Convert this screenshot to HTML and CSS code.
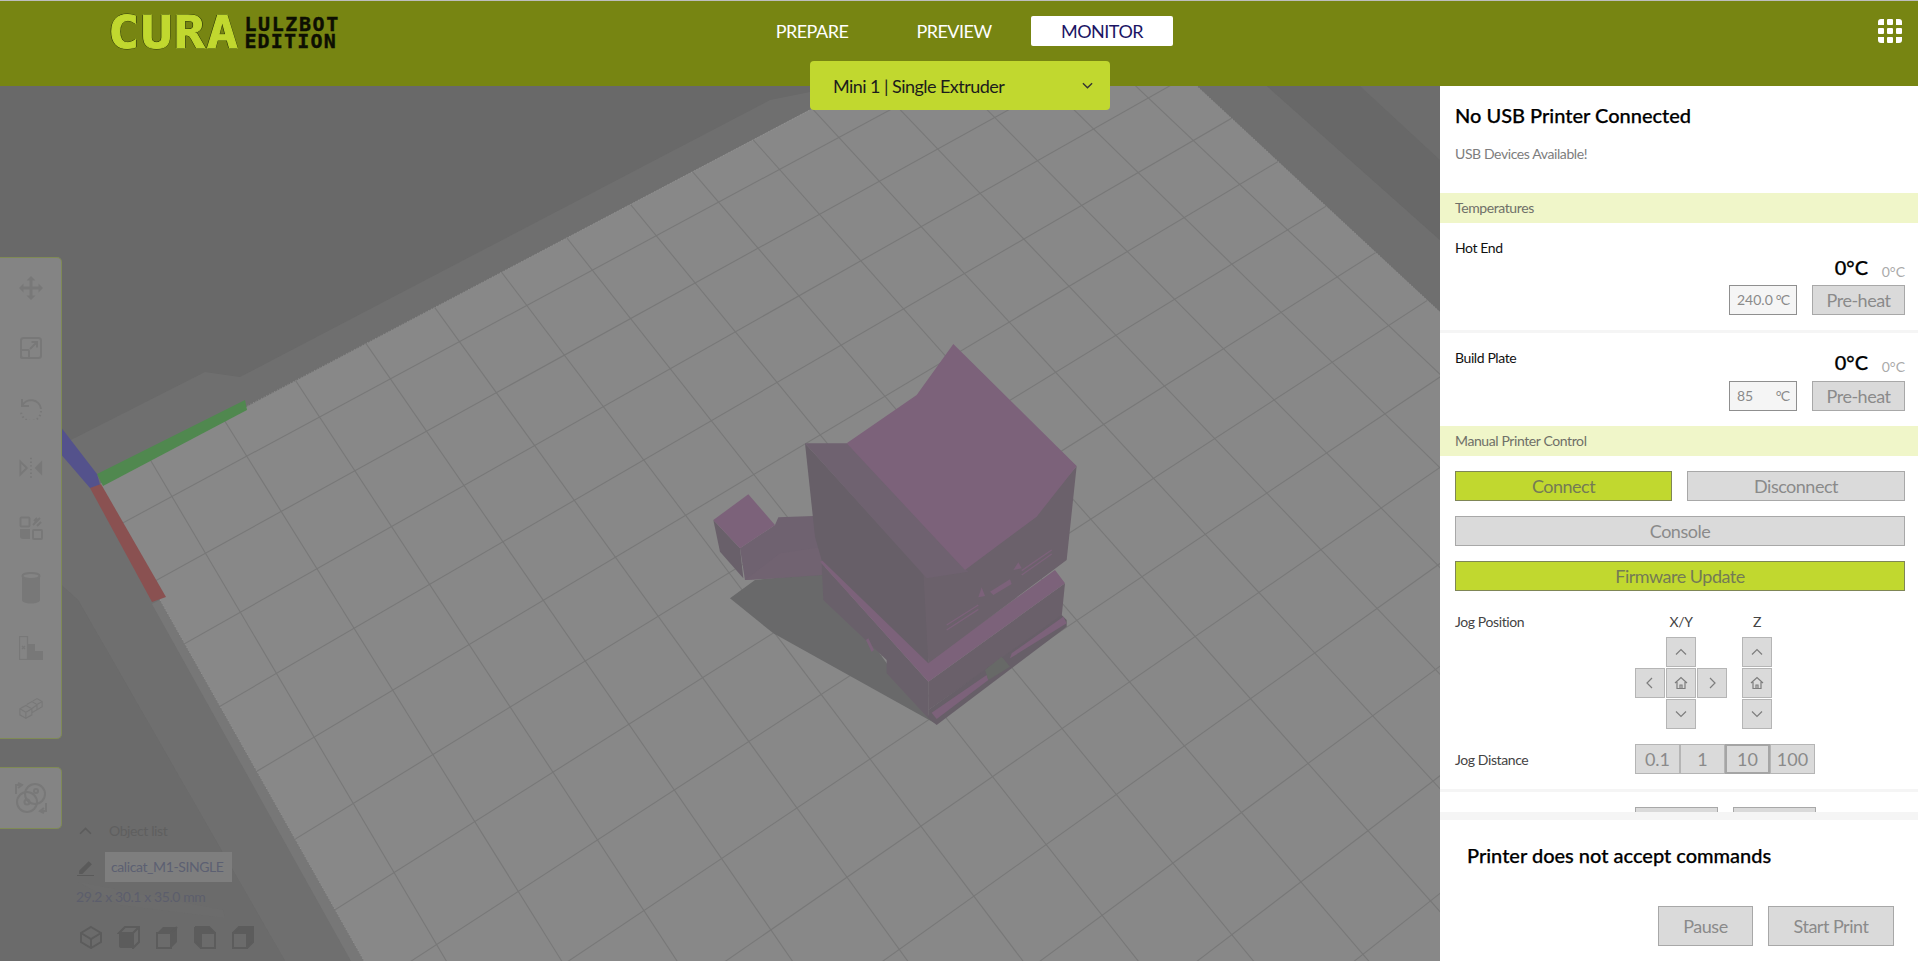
FILE: index.html
```html
<!DOCTYPE html>
<html lang="en">
<head>
    <meta charset="UTF-8">
    <meta name="viewport" content="width=device-width, initial-scale=1.0">
    <title>Cura LulzBot Edition</title>
    <link rel="stylesheet" href="styles.css">
</head>
<body>
    <header class="topbar">
        <div class="logo">
            <span class="logo-cura">CURA</span>
            <span class="logo-sub">
                <span class="logo-line">LULZBOT</span>
                <span class="logo-line logo-line-tight">EDITION</span>
            </span>
        </div>
        <nav class="nav">
            <span class="nav-item">PREPARE</span>
            <span class="nav-item">PREVIEW</span>
            <span class="nav-item active">MONITOR</span>
        </nav>
        <svg class="apps-icon" viewBox="0 0 24 24">
            <path d="M3 0h3v6H0V3a3 3 0 0 1 3-3z"/>
            <rect x="9" width="6" height="6" rx="1"/>
            <path d="M18 0h3a3 3 0 0 1 3 3v3h-6z"/>
            <rect y="9" width="6" height="6" rx="1"/>
            <rect x="9" y="9" width="6" height="6" rx="1"/>
            <rect x="18" y="9" width="6" height="6" rx="1"/>
            <path d="M0 18h6v6H3a3 3 0 0 1-3-3z"/>
            <rect x="9" y="18" width="6" height="6" rx="1"/>
            <path d="M18 18h6v3a3 3 0 0 1-3 3h-3z"/>
        </svg>
        <div class="printer-select">
            <span>Mini 1 | Single Extruder</span>
            <svg class="select-chevron" viewBox="0 0 12 8"><path d="M1 1l5 5 5-5"/></svg>
        </div>
    </header>

    <div class="workspace">
        <main class="viewport">
            <svg class="scene" viewBox="0 86 1440 875" preserveAspectRatio="none">
                <defs>
                    <clipPath id="bedClip">
                        <polygon points="98,485 900,62 1171,62 1440,312 1440,961 364,961 160,600"/>
                    </clipPath>
                </defs>
                <rect x="0" y="86" width="1440" height="875" fill="#696969"/>
                <!-- build volume bands -->
                <polygon points="840,86 770,100 240,377 205,372 0,476 0,530 78,600 285,961 364,961 98,485 900,62 900,86" fill="#6f6f6f"/>
                <polygon points="0,530 78,600 285,961 0,961" fill="#6b6b6b"/>
                <polygon points="1197,86 1267,86 1440,240 1440,312" fill="#6f6f6f"/>
                <polygon points="1267,86 1360,86 1440,160 1440,240" fill="#686868"/>
                <polygon points="1360,86 1440,86 1440,160" fill="#6d6d6d"/>
                <polygon points="78,882 223,910 225,918 120,905" fill="#6c6c6c"/>
                <polygon points="160,600 364,961 351,961 152,604" fill="#777777"/>
                <!-- bed -->
                <polygon points="98,485 900,62 1171,62 1440,312 1440,961 364,961 160,600" fill="#888888"/>
                <g id="grid" clip-path="url(#bedClip)" stroke="#787878" stroke-width="1.1"></g>
                <path d="M245 407L810 110M1197 86L1440 312M160 600L364 961" fill="none" stroke="#a0a0a0" stroke-width="1" stroke-dasharray="1 2" opacity="0.6"/>

                <!-- axes -->
                <polygon points="97,474 245,400 247,410 103,486" fill="#50884f"/>
                <polygon points="40,400 97,474 101,488 90,488 40,430" fill="#54528c"/>
                <polygon points="90,488 101,484 166,597 152,602" fill="#8a5151"/>

                <!-- model -->
                <g transform="translate(690 330) scale(0.33333)">
                    <polygon points="120,805 195,750 400,730 590,1000 735,1180 250,910" fill="#69696a"/>
                    <polygon points="70,570 150,655 160,745 90,665" fill="#69606a"/>
                    <polygon points="150,655 255,585 265,562 370,558 385,640 420,680 395,735 165,750" fill="#6f6270"/>
                    <polygon points="165,750 270,670 400,650 395,735" fill="#716371"/>
                    <polygon points="70,570 175,493 255,585 150,655" fill="#7c627a"/>
                    <polygon points="395,700 715,1055 715,1165 590,1030 590,990 400,810" fill="#69606a"/>
                    <polygon points="715,1055 1125,760 1115,860 715,1140" fill="#6a606a"/>
                    <polygon points="715,1140 1115,855 1130,870 1130,890 740,1185 715,1165" fill="#675f68"/>
                    <polygon points="725,1148 890,1035 895,1050 740,1167" fill="#7c627a"/>
                    <polygon points="965,970 1120,860 1130,880 960,985" fill="#7c627a"/>
                    <polygon points="885,1020 935,980 960,1010 895,1050" fill="#676967"/>
                    <polygon points="390,695 425,680 715,995 1095,720 1125,760 715,1055" fill="#7c627a"/>
                    <polygon points="345,340 710,740 715,1000 395,690 375,620" fill="#675f68"/>
                    <polygon points="825,710 1040,550 1160,408 1130,690 1090,720 715,1000 700,730" fill="#6b616b"/>
                    <polygon points="345,340 480,340 835,725 710,745" fill="#6f6270"/>
                    <polygon points="790,42 1160,408 1040,560 825,720 470,340 680,195" fill="#7c627a"/>
                    <path d="M770 885L865 825M770 900L865 838M995 722L1085 660M995 735L1085 672" stroke="#7c627a" stroke-width="4"/>
                    <polygon points="970,720 985,697 995,715" fill="#7c627a"/>
                    <polygon points="865,802 875,772 885,798" fill="#7c627a"/>
                    <polygon points="900,785 960,748 965,762 910,795" fill="#7c627a"/>
                    <polygon points="528,930 535,925 552,960 545,966" fill="#7c627a"/>
                </g>
            </svg>

            <div class="tool-panel">
                <span class="tool">
                    <svg viewBox="0 0 24 24"><path class="fill" d="M12 0l4.500 4.500H13.500V10.500h6V7.500L24 12l-4.500 4.500v-3h-6v6h3L12 24l-4.500-4.500h3v-6h-6v3L0 12l4.500-4.500v3h6v-6h-3z"/></svg>
                </span>
                <span class="tool">
                    <svg viewBox="0 0 24 24"><rect class="line" x="2" y="2" width="20" height="20" rx="2.500"/><rect class="line" x="2" y="14" width="8" height="8" rx="1"/><path class="line" d="M11 13l7-7M12.500 6H18v5.500"/></svg>
                </span>
                <span class="tool">
                    <svg viewBox="0 0 24 24"><path class="line" d="M3 10a10 10 0 0 1 19 3"/><path class="line" d="M3 3v7h7"/><path class="line dots" d="M22 15a10 10 0 0 1-20 0"/></svg>
                </span>
                <span class="tool">
                    <svg viewBox="0 0 26 24"><path class="line" d="M1.500 5l7 7-7 7z"/><path class="fill" d="M25 4v16l-8-8z"/><path class="line dots" d="M13 1v22"/></svg>
                </span>
                <span class="tool">
                    <svg viewBox="0 0 24 24"><rect class="line" x="1.500" y="1.500" width="9" height="9" rx="1"/><path class="line" d="M14 9l7-7M15 5l3-3M18 10l4-4"/><path class="fill" d="M1 13h10v10H4a3 3 0 0 1-3-3z"/><rect class="line" x="14" y="14" width="9" height="9" rx="1"/></svg>
                </span>
                <span class="tool">
                    <svg class="tool-tall" viewBox="0 0 20 32"><path class="fill" d="M1 4v24c0 2 4 3.500 9 3.500s9-1.500 9-3.500V4c0 2-4 3.500-9 3.500S1 6 1 4z"/><ellipse class="line" cx="10" cy="4" rx="8.500" ry="3"/></svg>
                </span>
                <span class="tool">
                    <svg viewBox="0 0 24 24"><rect class="line thin" x="0.500" y="0.500" width="8" height="23"/><path class="fill" d="M9 8h7v7h8v9H9z"/><path class="line thin" d="M3 10l3 3M6 10l-3 3"/></svg>
                </span>
                <span class="tool">
                    <svg viewBox="0 0 28 24"><path class="line thin" d="M1 13l7-4 7 4v7l-7 4-7-4zM1 13l7 4 7-4M8 17v7M9 8l6-3.500 6 3.500v6l-6 3.500M15 12.500l6-4M16 4l5-3 6 3.500v6l-6 3.500M21 8l6-3.500"/></svg>
                </span>
            </div>

            <div class="tool-panel tool-panel-single">
                <span class="tool">
                    <svg class="tool-wide" viewBox="0 0 32 32"><circle class="line" cx="20" cy="12" r="10"/><circle class="line" cx="12" cy="20" r="10"/><circle class="line" cx="12" cy="20" r="2.500"/><circle class="line" cx="21" cy="9" r="2"/><path class="line" d="M1 12V3h5M3 1L7 3 3 6M31 21v8h-6M29 31l-4-2 4-3"/></svg>
                </span>
            </div>

            <div class="object-list">
                <div class="object-head">
                    <svg class="object-chevron" viewBox="0 0 12 8"><path d="M1 7l5-5 5 5"/></svg>
                    <span>Object list</span>
                </div>
                <div class="object-name">
                    <svg class="object-pen" viewBox="0 0 16 16"><path class="pen-fill" d="M2 11L11 2l3 3-9 9H2zM0 15h16v1H0z"/></svg>
                    <span class="object-field">calicat_M1-SINGLE</span>
                </div>
                <div class="object-size">29.2 x 30.1 x 35.0 mm</div>
                <div class="view-icons">
                    <svg viewBox="0 0 24 24"><path d="M12 2l10 6v9l-10 6-10-6V8zM2 8l10 6 10-6M12 14v9"/></svg>
                    <svg viewBox="0 0 24 24"><path class="solid" d="M2 8h14v15H4a2 2 0 0 1-2-2z"/><path d="M2 8l6-6h14v15l-6 6V8zM16 8l6-6"/></svg>
                    <svg viewBox="0 0 24 24"><path class="solid" d="M2 8l6-6h14v15l-6 6V8z"/><path d="M2 8h14v15H2zM16 8l6-6"/></svg>
                    <svg viewBox="0 0 24 24"><path class="solid" d="M2 2h14l6 6H8v15l-6-6z"/><path d="M8 8h14v15H8zM2 2h14l6 6M2 2v15l6 6"/></svg>
                    <svg viewBox="0 0 24 24"><path class="solid" d="M8 2h14v15l-6 6V8H2z"/><path d="M2 8h14v15H2zM2 8l6-6h14v15l-6 6"/></svg>
                </div>
            </div>
        </main>

        <aside class="panel">
            <div class="panel-scroll">
                <div class="status-head">
                    <h2 class="status-title">No USB Printer Connected</h2>
                    <p class="status-sub">USB Devices Available!</p>
                </div>

                <div class="band">Temperatures</div>

                <section class="temp">
                    <div class="temp-label">Hot End</div>
                    <div class="temp-now"><strong>0°C</strong><span>0°C</span></div>
                    <div class="temp-controls">
                        <span class="temp-input"><span>240.0</span><span class="temp-unit">°C</span></span>
                        <button class="btn btn-preheat">Pre-heat</button>
                    </div>
                </section>
                <div class="rule"></div>
                <section class="temp temp-tight">
                    <div class="temp-label">Build Plate</div>
                    <div class="temp-now"><strong>0°C</strong><span>0°C</span></div>
                    <div class="temp-controls">
                        <span class="temp-input"><span>85</span><span class="temp-unit">°C</span></span>
                        <button class="btn btn-preheat">Pre-heat</button>
                    </div>
                </section>

                <div class="band">Manual Printer Control</div>

                <section class="manual">
                    <div class="btn-row">
                        <button class="btn btn-green">Connect</button>
                        <button class="btn">Disconnect</button>
                    </div>
                    <button class="btn">Console</button>
                    <button class="btn btn-green">Firmware Update</button>
                </section>

                <section class="jog">
                    <div class="jog-label">Jog Position</div>
                    <div class="jog-pad">
                        <div class="jog-axis">X/Y</div>
                        <span></span>
                        <button class="jog-btn"><svg viewBox="0 0 14 14"><path d="M2 9.500l5-5 5 5"/></svg></button>
                        <span></span>
                        <button class="jog-btn"><svg viewBox="0 0 14 14"><path d="M9 2L4 7l5 5"/></svg></button>
                        <button class="jog-btn"><svg viewBox="0 0 14 14"><path d="M1 7l6-5.500L13 7M3 6v6.500h8V6M6 12.500V9h2v3.500"/></svg></button>
                        <button class="jog-btn"><svg viewBox="0 0 14 14"><path d="M5 2l5 5-5 5"/></svg></button>
                        <span></span>
                        <button class="jog-btn"><svg viewBox="0 0 14 14"><path d="M2 4.500l5 5 5-5"/></svg></button>
                        <span></span>
                    </div>
                    <div class="jog-pad jog-z">
                        <div class="jog-axis">Z</div>
                        <button class="jog-btn"><svg viewBox="0 0 14 14"><path d="M2 9.500l5-5 5 5"/></svg></button>
                        <button class="jog-btn"><svg viewBox="0 0 14 14"><path d="M1 7l6-5.500L13 7M3 6v6.500h8V6M6 12.500V9h2v3.500"/></svg></button>
                        <button class="jog-btn"><svg viewBox="0 0 14 14"><path d="M2 4.500l5 5 5-5"/></svg></button>
                    </div>
                </section>

                <section class="distance">
                    <div class="jog-label jog-label-low">Jog Distance</div>
                    <div class="distance-group">
                        <button class="distance-btn">0.1</button>
                        <button class="distance-btn">1</button>
                        <button class="distance-btn selected">10</button>
                        <button class="distance-btn">100</button>
                    </div>
                </section>
                <div class="rule"></div>

                <section class="extra">
                    <button class="btn extra-btn"></button>
                    <button class="btn extra-btn"></button>
                </section>
            </div>

            <div class="panel-foot">
                <h2 class="foot-title">Printer does not accept commands</h2>
                <div class="foot-actions">
                    <button class="btn btn-pause">Pause</button>
                    <button class="btn btn-start">Start Print</button>
                </div>
            </div>
        </aside>
    </div>

    <script src="grid.js"></script>
</body>
</html>
```

FILE: styles.css
```css
* {
    box-sizing: border-box;
}
html, body {
    height: 100%;
}
body {
    margin: 0;
    display: flex;
    flex-direction: column;
    overflow: hidden;
    font-family: Lato, "Noto Sans", sans-serif;
    font-size: 14px;
    letter-spacing: -0.4px;
    color: #111;
    background: #fff;
}

/* top bar */
.topbar {
    position: relative;
    z-index: 2;
    flex: none;
    display: flex;
    align-items: flex-start;
    height: 86px;
    padding: 15px 16px 0 110px;
    border-top: 1px solid #bdbdbd;
    background: #778512;
}
.logo {
    display: flex;
    width: 230px;
    height: 33px;
}
.logo-cura {
    margin-left: -2px;
    font-family: "DejaVu Sans Mono", monospace;
    font-weight: 700;
    font-size: 45px;
    line-height: 33px;
    letter-spacing: 1.500px;
    color: #c1d82f;
    -webkit-text-stroke: 1px #c1d82f;
    text-shadow: 1px 0 #2f3a0a, -1px 0 #2f3a0a, 0 1px #2f3a0a, 0 -1px #2f3a0a;
    transform: scaleX(1.15);
    transform-origin: left center;
}
.logo-sub {
    display: flex;
    flex-direction: column;
    margin-left: 22px;
}
.logo-line {
    font-family: "DejaVu Sans Mono", monospace;
    font-weight: 700;
    font-size: 20px;
    line-height: 17px;
    letter-spacing: 1.600px;
    color: #0d0f02;
    -webkit-text-stroke: 0.400px #0d0f02;
}
.logo-line-tight {
    letter-spacing: 1.200px;
}
.nav {
    display: flex;
    margin-left: 401px;
}
.nav-item {
    width: 142px;
    height: 30px;
    font-size: 18px;
    line-height: 30px;
    letter-spacing: -0.5px;
    text-align: center;
    color: #fff;
}
.nav-item.active {
    margin-left: 6px;
    border-radius: 2px;
    background: #fff;
    color: #1b1464;
}
.apps-icon {
    width: 24px;
    height: 24px;
    margin: 3px 0 0 auto;
    fill: #fff;
}
.printer-select {
    position: absolute;
    left: 810px;
    top: 60px;
    display: flex;
    align-items: center;
    justify-content: space-between;
    width: 300px;
    height: 49px;
    padding: 0 17px 0 23px;
    border-radius: 4px;
    background: #c1d82f;
    font-size: 18px;
    letter-spacing: -0.55px;
    color: #1c1c1c;
}
.select-chevron {
    width: 11px;
    height: 8px;
    fill: none;
    stroke: #333;
    stroke-width: 1.500;
}

/* main layout */
.workspace {
    flex: 1;
    display: flex;
    min-height: 0;
}
.viewport {
    position: relative;
    flex: 1;
    overflow: hidden;
}
.scene {
    position: absolute;
    inset: 0;
    width: 100%;
    height: 100%;
}

/* left tools */
.tool-panel {
    position: absolute;
    left: 0;
    top: 171px;
    display: flex;
    flex-direction: column;
    width: 62px;
    border: 1px solid #7f8a55;
    border-left: none;
    border-radius: 0 5px 5px 0;
    background: #848484;
}
.tool-panel-single {
    top: 681px;
}
.tool {
    display: flex;
    align-items: center;
    justify-content: center;
    height: 60px;
}
.tool svg {
    width: 24px;
    height: 24px;
}
.tool .tool-tall {
    width: 20px;
    height: 32px;
}
.tool .tool-wide {
    width: 32px;
    height: 32px;
}
.fill {
    fill: #787878;
}
.line {
    fill: none;
    stroke: #787878;
    stroke-width: 2;
}
.line.thin {
    stroke-width: 1.300;
}
.line.dots {
    stroke-dasharray: 1.500 2.500;
}

/* object list */
.object-list {
    position: absolute;
    left: 76px;
    top: 733px;
    display: flex;
    flex-direction: column;
    color: #5f5f5f;
}
.object-head {
    display: flex;
    align-items: center;
    height: 22px;
    padding-left: 3px;
}
.object-chevron {
    width: 13px;
    height: 9px;
    margin-right: 17px;
    fill: none;
    stroke: #5c5c5c;
    stroke-width: 1.500;
}
.object-name {
    display: flex;
    align-items: center;
    height: 30px;
    margin-top: 11px;
    padding-left: 1px;
}
.object-pen {
    width: 17px;
    height: 17px;
    margin-right: 11px;
}
.pen-fill {
    fill: #5a5a5a;
}
.object-field {
    width: 127px;
    height: 30px;
    padding-left: 6px;
    line-height: 30px;
    background: #7e7e7e;
    color: #5c6072;
    white-space: nowrap;
}
.object-size {
    height: 20px;
    margin-top: 5px;
    line-height: 20px;
    color: #5c5e6c;
}
.view-icons {
    display: flex;
    gap: 14px;
    margin-top: 18px;
    padding-left: 3px;
}
.view-icons svg {
    width: 24px;
    height: 24px;
    fill: none;
    stroke: #5c5c5c;
    stroke-width: 2;
}
.view-icons .solid {
    fill: #5c5c5c;
    stroke: none;
}

/* right panel */
.panel {
    flex: none;
    display: flex;
    flex-direction: column;
    width: 478px;
    background: #fff;
}
.panel-scroll {
    height: 726px;
    overflow: hidden;
}
.status-head {
    height: 107px;
    padding: 17px 13px 0 15px;
}
.status-title {
    margin: 0;
    font-size: 20px;
    font-weight: 500;
    line-height: 24px;
    letter-spacing: 0;
    color: #000;
    -webkit-text-stroke: 0.250px #000;
}
.status-sub {
    margin: 18px 0 0;
    line-height: 18px;
    color: #7d7d7d;
}
.band {
    height: 30px;
    padding-left: 15px;
    line-height: 30px;
    background: #f0f6c9;
    color: #6f7068;
}
.rule {
    height: 3px;
    background: #f5f5f5;
}
.temp {
    height: 107px;
    padding: 16px 13px 0 15px;
}
.temp-label {
    height: 17px;
    line-height: 18px;
}
.temp-now {
    display: flex;
    justify-content: flex-end;
    height: 24px;
    line-height: 24px;
}
.temp-now strong {
    margin-top: -1px;
    font-size: 20px;
    font-weight: 500;
    letter-spacing: 0;
    color: #000;
    -webkit-text-stroke: 0.250px #000;
}
.temp-now span {
    width: 37px;
    padding-top: 4px;
    text-align: right;
    letter-spacing: 0;
    color: #aaa;
}
.temp-controls {
    display: flex;
    justify-content: flex-end;
    gap: 15px;
    margin-top: 5px;
}
.temp-tight {
    height: 93px;
}
.temp-tight .temp-label {
    height: 2px;
}
.temp-tight .temp-controls {
    margin-top: 6px;
}
.temp-input {
    display: flex;
    justify-content: space-between;
    width: 68px;
    height: 30px;
    padding: 0 7px;
    border: 1px solid #8f8f8f;
    background: #f5f5f5;
    line-height: 28px;
    letter-spacing: 0;
    color: #8a8a8a;
}
.temp-unit {
    letter-spacing: -1px;
}
.btn {
    display: block;
    width: 100%;
    height: 30px;
    padding: 0;
    border: 1px solid #a8a8a8;
    background: #dadada;
    font-family: inherit;
    font-size: 18px;
    letter-spacing: -0.5px;
    color: #8a8a8a;
}
.btn-preheat {
    width: 93px;
}
.btn-green {
    border-color: #7f8656;
    background: #c1d82f;
    color: #747b55;
}
.manual {
    display: flex;
    flex-direction: column;
    gap: 15px;
    padding: 15px 13px 0 15px;
}
.btn-row {
    display: flex;
    gap: 15px;
}
.btn-row .btn {
    width: 218px;
}
.btn-row .btn-green {
    width: 217px;
}

/* jog */
.jog {
    display: flex;
    height: 131px;
    margin-top: 22px;
    padding-left: 15px;
}
.jog-label {
    flex: none;
    width: 180px;
    line-height: 18px;
    color: #444;
}
.jog-label-low {
    padding-top: 2px;
}
.jog-pad {
    display: grid;
    grid-template-columns: repeat(3, 30px);
    grid-template-rows: 23px repeat(3, 30px);
    gap: 1px;
}
.jog-z {
    grid-template-columns: 30px;
    margin-left: 15px;
}
.jog-axis {
    grid-column: 1 / -1;
    line-height: 18px;
    text-align: center;
    color: #444;
}
.jog-btn {
    display: flex;
    align-items: center;
    justify-content: center;
    width: 30px;
    height: 30px;
    padding: 0;
    border: 1px solid #b5b5b5;
    background: #dadada;
}
.jog-btn svg {
    width: 14px;
    height: 14px;
    fill: none;
    stroke: #7d7d7d;
    stroke-width: 1.200;
}
.distance {
    display: flex;
    align-items: center;
    height: 45px;
    padding: 0 0 15px 15px;
}
.distance-group {
    display: flex;
}
.distance-btn {
    width: 45px;
    height: 30px;
    padding: 0;
    border: 1px solid #b5b5b5;
    background: #dadada;
    font-family: inherit;
    font-size: 18px;
    letter-spacing: 0;
    color: #8a8a8a;
}
.distance-btn.selected {
    border: 2px solid #a5a5a5;
}
.extra {
    display: flex;
    gap: 15px;
    padding: 15px 0 0 195px;
}
.extra .extra-btn {
    width: 83px;
}

/* printer actions */
.panel-foot {
    flex: 1;
    padding: 23px 24px 0 27px;
    border-top: 8px solid #f5f5f5;
}
.foot-title {
    margin: 0;
    font-size: 20px;
    font-weight: 500;
    line-height: 24px;
    letter-spacing: 0;
    color: #000;
    -webkit-text-stroke: 0.250px #000;
}
.foot-actions {
    display: flex;
    justify-content: flex-end;
    gap: 15px;
    margin-top: 39px;
}
.foot-actions .btn {
    height: 40px;
}
.foot-actions .btn-pause {
    width: 95px;
}
.foot-actions .btn-start {
    width: 126px;
}
```

FILE: grid.js
```js
// bed grid lines: homography fitted to grid crossings read off the screen
// each row is [u, x, y, u, x, y, ...] for one v
const crossings = {
    '-2': [-6, 592, 271, -5, 657, 236, -4, 718, 203, -3, 779, 169, -2, 840, 137],
    '-1': [-7, 564, 355, -6, 630, 318, -5, 695, 283, -4, 758, 249, -3, 819, 214, -2, 880, 181, -1, 937, 149],
    '0': [-12, 240, 612, -11, 317, 568, -10, 392, 526, -9, 463, 485, -8, 535, 446, -7, 603, 407, -6, 670, 368,
        -5, 736, 332, -4, 799, 297, -3, 863, 260, -2, 921, 227, -1, 980, 193, 0, 1037, 160, 1, 1093, 129, 2, 1148, 98],
    '1': [-12, 277, 673, -11, 353, 628, -10, 430, 585, -9, 503, 542, -8, 573, 500, -7, 643, 460, -6, 712, 421,
        -5, 777, 383, -4, 842, 345, -3, 904, 309, -2, 965, 273, -1, 1025, 240, 0, 1082, 205, 1, 1138, 173, 2, 1193, 141],
    '2': [-12, 315, 737, -11, 393, 690, -10, 469, 645, -9, 543, 600, -8, 615, 557, -7, 686, 516, -6, 753, 475,
        -5, 820, 435, -4, 885, 395, 1, 1183, 217, 2, 1240, 185],
    '3': [-12, 353, 803, -11, 433, 755, -10, 511, 707, -9, 585, 662, 1, 1232, 263, 2, 1288, 230],
    '4': [-12, 395, 872, -11, 475, 822, -10, 553, 773, -9, 628, 723, 1, 1282, 312, 2, 1337, 277],
    '5': [-11, 518, 892, -10, 597, 840, 1, 1332, 363, 2, 1388, 325]
};

function solve(m, n) {
    for (let i = 0; i < n; i++) {
        let best = i;
        for (let r = i + 1; r < n; r++) {
            if (Math.abs(m[r][i]) > Math.abs(m[best][i])) best = r;
        }
        [m[i], m[best]] = [m[best], m[i]];
        for (let r = 0; r < n; r++) {
            if (r === i) continue;
            const f = m[r][i] / m[i][i];
            for (let c = i; c <= n; c++) m[r][c] -= f * m[i][c];
        }
    }
    return m.map((row, i) => row[n] / row[i]);
}

// normal equations, least squares over all crossings
const normal = [];
for (let i = 0; i < 8; i++) normal.push(new Array(9).fill(0));

function addRow(row, target) {
    for (let i = 0; i < 8; i++) {
        for (let j = 0; j < 8; j++) normal[i][j] += row[i] * row[j];
        normal[i][8] += row[i] * target;
    }
}

Object.keys(crossings).forEach(key => {
    const v = Number(key);
    const list = crossings[key];
    for (let i = 0; i < list.length; i += 3) {
        const u = list[i], x = list[i + 1], y = list[i + 2];
        addRow([u, v, 1, 0, 0, 0, -u * x, -v * x], x);
        addRow([0, 0, 0, u, v, 1, -u * y, -v * y], y);
    }
});
const h = solve(normal, 8);

function project(u, v) {
    const w = h[6] * u + h[7] * v + 1;
    return [(h[0] * u + h[1] * v + h[2]) / w, (h[3] * u + h[4] * v + h[5]) / w];
}

const grid = document.getElementById('grid');

function addLine(a, b) {
    const line = document.createElementNS('http://www.w3.org/2000/svg', 'line');
    line.setAttribute('x1', a[0]);
    line.setAttribute('y1', a[1]);
    line.setAttribute('x2', b[0]);
    line.setAttribute('y2', b[1]);
    grid.appendChild(line);
}

for (let u = -14; u <= 5; u++) addLine(project(u, -4), project(u, 14));
for (let v = -4; v <= 14; v++) addLine(project(-14, v), project(5, v));
```
